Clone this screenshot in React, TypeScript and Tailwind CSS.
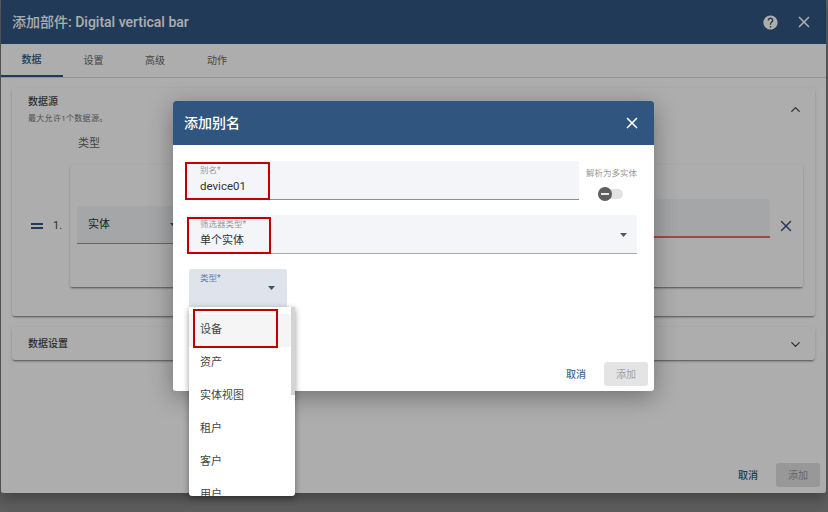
import React from "react";
import { X, ChevronUp, ChevronDown } from "lucide-react";
import { MdHelp } from "react-icons/md";

const font = { fontFamily: 'Roboto, "Noto Sans CJK SC", sans-serif' };

const Caret: React.FC<{ className?: string }> = ({ className }) => (
  <svg width="7" height="4" viewBox="0 0 7 4" className={className}>
    <path d="M0 0h7L3.5 4z" fill="currentColor" />
  </svg>
);

const cardShadow = "shadow-[0_2px_2px_-1px_rgba(0,0,0,0.45),0_1px_3px_rgba(0,0,0,0.14)]";

const WidgetDialog: React.FC = () => (
  <div className="relative w-[825px] h-[493px] ml-px bg-white flex flex-col rounded-b-[3px] overflow-hidden shadow-[0_6px_14px_rgba(0,0,0,0.3)]">
    {/* header */}
    <div className="h-11 shrink-0 bg-[#305680] text-white flex items-center pl-[11px] pr-[13px]">
      <span className="text-[14px] font-medium">添加部件: Digital vertical bar</span>
      <MdHelp size={17} className="ml-auto mr-[16px]" />
      <X size={18} strokeWidth={2.2} />
    </div>
    {/* tabs */}
    <div className="h-[34px] shrink-0 flex border-b border-[#d8d8d8] text-[10px] text-[#666] -ml-px">
      <div className="w-[63px] flex items-center justify-center text-[#305680] border-b-2 border-[#305680] font-medium">数据</div>
      <div className="w-[61px] flex items-center justify-center">设置</div>
      <div className="w-[62px] flex items-center justify-center">高级</div>
      <div className="w-[62px] flex items-center justify-center">动作</div>
    </div>
    {/* body */}
    <div className="flex-1 px-[11px] pt-[10px] flex flex-col gap-[11px]">
      <div className={`h-[228px] rounded-[3px] bg-white relative pl-4 pr-3 pt-[7px] ${cardShadow}`}>
        <div className="text-[10px] font-medium leading-[14px] text-[#444]">数据源</div>
        <div className="text-[8px] leading-[12px] mt-[4px] tracking-[0.3px] text-[#777]">最大允许1个数据源。</div>
        <div className="text-[11px] leading-[16px] text-[#666] mt-[11px] ml-[50px]">类型</div>
        <ChevronUp size={15} className="absolute right-3 top-[14px] text-[#444]" />
        <div className="flex items-center mt-[13px]">
          <div className="ml-[3px] w-3 h-[6px] border-y-2 border-[#305680]" />
          <span className="ml-[10px] w-[17px] text-[11px] text-[#444]">1.</span>
          <div className={`flex-1 h-[122px] rounded-[2px] pl-[7px] pr-[8px] flex items-center ${cardShadow}`}>
            <div className="w-[103px] h-[38px] mb-[3px] pt-[2px] bg-[#f4f5f8] border-b border-[#999] flex items-center justify-between pl-[11px] pr-[3px] text-[11px] text-[#333] rounded-t-[3px]">
              实体
              <Caret className="text-[#555]" />
            </div>
            <div className="ml-auto w-[160px] h-[39px] -mt-[15px] bg-[#f4f5f8] border-b-2 border-[#f06a6a] rounded-t-[3px]" />
            <X size={18} strokeWidth={1.9} className="ml-[7px] text-[#305680]" />
          </div>
        </div>
      </div>
      <div className={`h-[33px] rounded-[3px] bg-white flex items-center justify-between pl-4 pr-3 ${cardShadow}`}>
        <span className="text-[10px] font-medium text-[#444]">数据设置</span>
        <ChevronDown size={15} className="mt-[2px] text-[#444]" />
      </div>
    </div>
    {/* footer */}
    <div className="flex items-center justify-end pb-[6px] pr-[6px] gap-[18px] text-[10px]">
      <span className="text-[#305680] font-medium">取消</span>
      <div className="w-11 h-6 rounded-[3px] bg-[#e0e0e0] text-[#999] flex items-center justify-center text-[10px]">添加</div>
    </div>
    {/* scrim over this dialog */}
    <div className="absolute inset-0 bg-black/32" />
  </div>
);

const AliasDialog: React.FC = () => (
  <div className="absolute left-[173px] top-[101px] w-[481px] h-[290px] bg-white rounded-[3px] shadow-[0_6px_24px_rgba(0,0,0,0.35)] flex flex-col overflow-hidden">
    <div className="h-11 shrink-0 bg-[#305680] text-white flex items-center justify-between pl-[11px] pr-[13px]">
      <span className="text-[14px] font-medium">添加别名</span>
      <X size={18} strokeWidth={2.2} />
    </div>
    <div className="flex-1 pl-[14px] pr-[16px] pt-4 relative">
      <div className="flex">
        <div className="w-[392px] h-[39px] bg-[#f4f5f8] border-b border-[#8e8e8e] rounded-t-[3px] pl-[13px] pt-[3px]">
          <div className="text-[8.5px] leading-[12px] text-[#999]">别名*</div>
          <div className="text-[11.5px] leading-[16px] mt-[2px] text-[#333]">device01</div>
        </div>
        <div className="flex-1 flex flex-col items-end pt-[6px] pr-px">
          <span className="text-[8.5px] leading-[12px] text-[#999]">解析为多实体</span>
          <div className="relative self-start ml-[21px] w-[23px] h-[10px] mt-[10px] rounded-full bg-[#e2e2e2]">
            <div className="absolute -left-[2px] -top-[2px] w-[14px] h-[14px] rounded-full bg-[#5e5e5e] flex items-center justify-center">
              <div className="w-[8px] h-[2px] bg-[#e8e8e8]" />
            </div>
          </div>
        </div>
      </div>
      <div className="w-[450px] h-[39px] mt-[15px] bg-[#f4f5f8] border-b border-[#a8a8a8] rounded-t-[3px] pl-[13px] pt-[3px] flex justify-between pr-[10px]">
        <div>
          <div className="text-[8.5px] leading-[12px] text-[#999]">筛选器类型*</div>
          <div className="text-[11px] leading-[16px] mt-[3px] text-[#333]">单个实体</div>
        </div>
        <Caret className="text-[#555] mt-[15px]" />
      </div>
      <div className="w-[98px] h-[39px] ml-[2px] mt-[15px] bg-[#dfe4ec] border-b border-[#305680] rounded-t-[3px] pl-[11px] pt-[3px] flex justify-between pr-3">
        <div className="text-[8.5px] leading-[12px] text-[#5f7fa3]">类型*</div>
        <Caret className="text-[#305680] mt-[14px]" />
      </div>
      <div className="absolute bottom-[5px] right-[6px] flex items-center gap-[18px] text-[10px]">
        <span className="text-[#47688f] font-medium">取消</span>
        <div className="w-11 h-6 rounded-[3px] bg-[#e4e4e4] text-[#a0a0a0] flex items-center justify-center">添加</div>
      </div>
    </div>
  </div>
);

const options = ["设备", "资产", "实体视图", "租户", "客户", "用户"];

const TypeMenu: React.FC = () => (
  <div className="absolute left-[189px] top-[307px] w-[106px] h-[189px] bg-white rounded-b-[3px] shadow-[0_2px_6px_rgba(0,0,0,0.4)] overflow-hidden">
    {options.map((o, i) => (
      <div key={o} className={`h-[33px] pl-[11px] flex items-center text-[11px] text-[#444] ${i === 0 ? "mt-[7px] bg-[#f5f5f5]" : ""}`}>
        {o}
      </div>
    ))}
    <div className="absolute right-0 top-0 w-1 h-[88px] bg-[#d4d4d4]" />
  </div>
);

// red annotation boxes drawn on top of the screenshot
const Mark: React.FC<{ className: string }> = ({ className }) => (
  <div className={`absolute border-2 border-[#c00000] ${className}`} />
);

export default function App() {
  return (
    <div className="relative w-[828px] h-[512px] overflow-hidden bg-[#5e5e5e]" style={font}>
      <WidgetDialog />
      <AliasDialog />
      <TypeMenu />
      <Mark className="left-[185px] top-[162px] w-[85px] h-[38px]" />
      <Mark className="left-[187px] top-[217px] w-[84px] h-[37px]" />
      <Mark className="left-[193px] top-[309px] w-[85px] h-[39px]" />
    </div>
  );
}
